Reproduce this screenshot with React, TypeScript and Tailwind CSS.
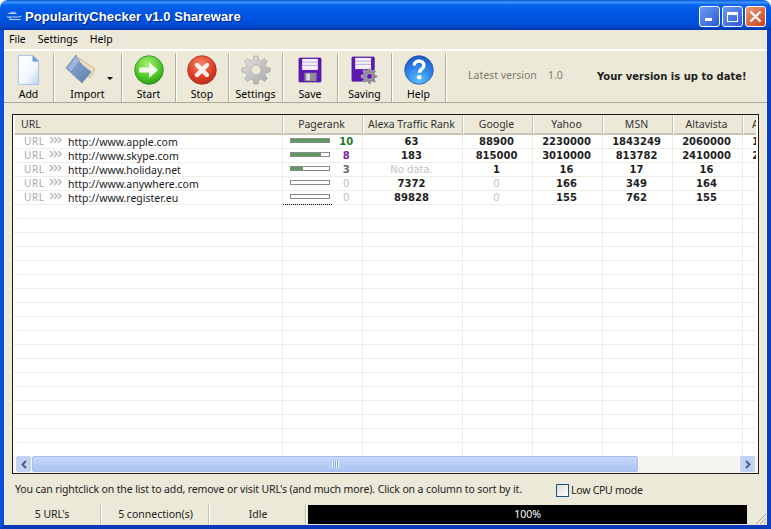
import React from "react";

const rows = [
  { url: "http://www.apple.com", pr: 10, prc: "text-[#1d7a2a] font-bold", fill: "w-full", cells: ["63", "88900", "2230000", "1843249", "2060000", "1950000"] },
  { url: "http://www.skype.com", pr: 8, prc: "text-[#7a1fa2] font-bold", fill: "w-[78%]", cells: ["183", "815000", "3010000", "813782", "2410000", "2340000"] },
  { url: "http://www.holiday.net", pr: 3, prc: "text-[#666666] font-bold", fill: "w-[30%]", cells: ["No data.", "1", "16", "17", "16", ""] },
  { url: "http://www.anywhere.com", pr: 0, prc: "text-[#c0c0c0] font-normal", fill: "w-0", cells: ["7372", "0", "166", "349", "164", ""] },
  { url: "http://www.register.eu", pr: 0, prc: "text-[#c0c0c0] font-normal", fill: "w-0", cells: ["89828", "0", "155", "762", "155", ""] },
];

const colW = ["w-[100px]", "w-[70px]", "w-[70px]", "w-[70px]", "w-[70px]", "w-[70px]"];

function Chevrons() {
  return (
    <svg width="14" height="8" viewBox="0 0 14 8" fill="none" stroke="#bdbdbd" strokeWidth="1.6">
      <path d="M1 1l3 3-3 3M5 1l3 3-3 3M9 1l3 3-3 3" />
    </svg>
  );
}

function AddIcon() {
  return (
    <svg width="25" height="32" viewBox="0 0 26 32">
      <defs>
        <linearGradient id="pg" x1="0" y1="0" x2="1" y2="1">
          <stop offset="0" stopColor="#ffffff" />
          <stop offset="0.6" stopColor="#f2f7ff" />
          <stop offset="1" stopColor="#bcd3f2" />
        </linearGradient>
      </defs>
      <path d="M2.5 1h15l6 6v24h-21z" fill="url(#pg)" stroke="#a9c2e6" />
      <path d="M17.5 1v6h6z" fill="#6f9ad6" stroke="#7ea4da" strokeWidth=".6" />
    </svg>
  );
}

function FolderIcon() {
  return (
    <svg width="32" height="32" viewBox="0 0 32 32">
      <defs>
        <linearGradient id="fg" x1="0" y1="0" x2="1" y2="1">
          <stop offset="0" stopColor="#8faed6" />
          <stop offset="1" stopColor="#5f7fb0" />
        </linearGradient>
      </defs>
      <path d="M14 4l16 11-5 9-10-7z" fill="#e9dcc0" stroke="#c9a878" strokeWidth=".7" />
      <path d="M11 1L1 14l16 15 9-11-9-7-3-4z" fill="url(#fg)" stroke="#6b86ad" strokeWidth=".7" />
      <path d="M3 14L11 3l3 4-8 10z" fill="#a9c2e2" opacity=".7" />
    </svg>
  );
}

function StartIcon() {
  return (
    <svg width="30" height="30" viewBox="0 0 30 30">
      <defs>
        <radialGradient id="gg" cx=".45" cy=".3" r=".8">
          <stop offset="0" stopColor="#a8f070" />
          <stop offset=".6" stopColor="#4cc626" />
          <stop offset="1" stopColor="#1f8a14" />
        </radialGradient>
      </defs>
      <circle cx="15" cy="15" r="14.3" fill="url(#gg)" stroke="#2a8a20" strokeWidth=".8" />
      <path d="M5 12.5h10V7l9 8-9 8v-5.5H5z" fill="#f2faee" />
    </svg>
  );
}

function StopIcon() {
  return (
    <svg width="30" height="30" viewBox="0 0 30 30">
      <defs>
        <radialGradient id="rg" cx=".45" cy=".3" r=".8">
          <stop offset="0" stopColor="#f58a6e" />
          <stop offset=".6" stopColor="#dd3c22" />
          <stop offset="1" stopColor="#a82414" />
        </radialGradient>
      </defs>
      <circle cx="15" cy="15" r="14.3" fill="url(#rg)" stroke="#a83020" strokeWidth=".8" />
      <path d="M10 10l10 10M20 10L10 20" stroke="#fff4f0" strokeWidth="4.4" strokeLinecap="round" />
    </svg>
  );
}

const gearPath =
  "M13 1h4l.7 4 2.6 1 3.3-2.4 2.8 2.8L24 9.7l1 2.6 4 .7v4l-4 .7-1 2.6 2.4 3.3-2.8 2.8-3.3-2.4-2.6 1-.7 4h-4l-.7-4-2.6-1-3.3 2.4-2.8-2.8L6 20.3l-1-2.6-4-.7v-4l4-.7 1-2.6-2.4-3.3 2.8-2.8L9.7 6l2.6-1zM15 10a5 5 0 100 10 5 5 0 000-10z";

function GearIcon() {
  return (
    <svg width="30" height="30" viewBox="0 0 30 30">
      <defs>
        <linearGradient id="sg" x1="0" y1="0" x2="1" y2="1">
          <stop offset="0" stopColor="#e4e4e4" />
          <stop offset="1" stopColor="#a6a6a6" />
        </linearGradient>
      </defs>
      <path d={gearPath} fill="url(#sg)" fillRule="evenodd" stroke="#a0a0a0" strokeWidth=".6" />
    </svg>
  );
}

function Floppy() {
  return (
    <>
      <rect x="1" y="1" width="24" height="26" rx="1" fill="#5f18b4" stroke="#4a1494" strokeWidth=".7" />
      <rect x="4.5" y="2" width="17" height="12" fill="#f3eff8" />
      <rect x="4.5" y="5" width="17" height="1" fill="#bcaad6" />
      <rect x="4.5" y="8.5" width="17" height="1" fill="#bcaad6" />
    </>
  );
}

function SaveIcon() {
  return (
    <svg width="24" height="26" viewBox="0 0 26 28">
      <Floppy />
      <rect x="7" y="17" width="13" height="9" fill="#8f8a96" />
      <rect x="9" y="18" width="4" height="7" fill="#ddd" />
    </svg>
  );
}

function SavingIcon() {
  return (
    <svg width="28" height="28" viewBox="0 0 30 30">
      <Floppy />
      <g transform="translate(10.5 12.5) scale(.62)">
        <path d={gearPath} fill="#8b8b8b" fillRule="evenodd" stroke="#e8e8e8" strokeWidth="1" />
      </g>
    </svg>
  );
}

function HelpIcon() {
  return (
    <svg width="30" height="30" viewBox="0 0 30 30">
      <defs>
        <radialGradient id="bg" cx=".5" cy=".85" r=".9">
          <stop offset="0" stopColor="#5cc0ff" />
          <stop offset=".6" stopColor="#2a7ae6" />
          <stop offset="1" stopColor="#1c4fb8" />
        </radialGradient>
      </defs>
      <circle cx="15" cy="15" r="14.3" fill="url(#bg)" stroke="#2a5cb4" strokeWidth=".8" />
      <path d="M10.3 10.5c0-6 9.6-6 9.6 0 0 3.6-4.6 3.6-4.6 7.2" fill="none" stroke="#fff" strokeWidth="3.4" />
      <circle cx="15.2" cy="22.3" r="2.3" fill="#fff" />
    </svg>
  );
}

function Tool({ label, width, icon, arrow }: { label: string; width: string; icon: React.ReactNode; arrow?: boolean }) {
  return (
    <div className={`${width} h-[49px] flex flex-col items-center relative border-r border-r-[#b4b09e] shadow-[1px_0_0_#ffffff]`}>
      <div className="h-[34px] flex items-center justify-center">{icon}</div>
      <div className="text-[10.5px] leading-[13px] text-black mt-[1px]">{label}</div>
      {arrow && <div className="absolute right-[8px] top-[24px] w-0 h-0 border-x-[3px] border-x-transparent border-t-[3px] border-t-black" />}
    </div>
  );
}

function HeaderCell({ label, width, left }: { label: string; width: string; left?: boolean }) {
  return (
    <div className={`${width} shrink-0 h-[20px] pt-[1px] flex items-center ${left ? "pl-[6px] justify-start" : "justify-center pr-[3px]"} border-r border-r-[#c7c3b0] border-l border-l-white border-b-2 border-b-[#c9c5b2] text-[10.5px] leading-none text-[#333]`}>
      {label}
    </div>
  );
}

export default function App() {
  return (
    <div className="w-[771px] h-[529px] flex flex-col overflow-hidden bg-white font-['Noto_Sans','DejaVu_Sans',sans-serif] text-[10.5px] text-black">
      {/* title bar */}
      <div className="h-[30px] shrink-0 rounded-t-[8px] flex items-center pl-[6px] pr-[5px] pt-[3px] bg-[linear-gradient(180deg,#0a58d8_0%,#3d95ff_8%,#0a66ee_16%,#0058e4_35%,#0053de_70%,#0048c8_90%,#0036a8_100%)]">
        <svg width="17" height="16" viewBox="0 0 20 16" fill="none" stroke="#dfe9f8" strokeWidth="1" className="shrink-0">
          <path d="M2 4l8-2 2 2H5M1 8h14l3-1M4 11h13M3 8l3 3" />
        </svg>
        <div className="ml-[2px] text-[13px] tracking-[0.08px] font-bold text-white [text-shadow:1px_1px_1px_#00208a] font-['Liberation_Sans',sans-serif]">
          PopularityChecker v1.0 Shareware
        </div>
        <div className="ml-auto flex gap-[2px]">
          <div className="w-[21px] h-[21px] rounded-[3px] border border-white bg-[linear-gradient(135deg,#6f9af0,#2a5ad8)] flex items-end pl-[5px] pb-[5px]">
            <div className="w-[7px] h-[3px] bg-white" />
          </div>
          <div className="w-[21px] h-[21px] rounded-[3px] border border-white bg-[linear-gradient(135deg,#6f9af0,#2a5ad8)] flex items-center justify-center">
            <div className="w-[11px] h-[10px] border border-white border-t-[3px]" />
          </div>
          <div className="w-[21px] h-[21px] rounded-[3px] border border-white bg-[linear-gradient(135deg,#ef9a78,#c8401c)] flex items-center justify-center">
            <svg width="13" height="13" viewBox="0 0 13 13" stroke="#fff" strokeWidth="2.2">
              <path d="M1.5 1.5l10 10M11.5 1.5l-10 10" />
            </svg>
          </div>
        </div>
      </div>

      {/* body with frame */}
      <div className="flex-1 min-h-0 flex flex-col bg-[#ece9d8] border-x-[4px] border-l-[#0a50dc] border-r-[#0a3ec4] border-b-[4px] border-b-[#0a3ab8]">
        {/* menu */}
        <div className="h-[19px] shrink-0 flex items-center pl-[5px] gap-[12px] text-black">
          <span>File</span>
          <span>Settings</span>
          <span>Help</span>
        </div>

        {/* toolbar */}
        <div className="h-[54px] shrink-0 border-t-[2px] border-t-white border-b border-b-[#aca899] flex pt-[2px] text-black">
          <Tool label="Add" width="w-[50px]" icon={<AddIcon />} />
          <Tool label="Import" width="w-[68px]" icon={<div className="-ml-[13px]"><FolderIcon /></div>} arrow />
          <Tool label="Start" width="w-[54px]" icon={<StartIcon />} />
          <Tool label="Stop" width="w-[53px]" icon={<StopIcon />} />
          <Tool label="Settings" width="w-[54px]" icon={<GearIcon />} />
          <Tool label="Save" width="w-[55px]" icon={<SaveIcon />} />
          <Tool label="Saving" width="w-[54px]" icon={<SavingIcon />} />
          <Tool label="Help" width="w-[54px]" icon={<HelpIcon />} />
          <div className="flex items-center h-[46px] pl-[22px] text-[#7e7b6e] whitespace-nowrap">
            <span className="w-[80px]">Latest version</span>
            <span className="w-[49px]">1.0</span>
            <span className="font-bold text-[#222] font-['DejaVu_Sans',sans-serif] text-[10px]">Your version is up to date!</span>
          </div>
        </div>

        {/* list */}
        <div className="mx-[8px] mt-[11px] h-[360px] shrink-0 border border-[#1c1c1c] bg-white flex flex-col overflow-hidden">
          <div className="shrink-0 pl-[1px] mr-[2px] overflow-hidden">
            <div className="flex w-[900px] bg-[#ece9d8]">
              <HeaderCell label="URL" width="w-[269px]" left />
              <HeaderCell label="Pagerank" width="w-[80px]" />
              <HeaderCell label="Alexa Traffic Rank" width="w-[100px]" />
              <HeaderCell label="Google" width="w-[70px]" />
              <HeaderCell label="Yahoo" width="w-[70px]" />
              <HeaderCell label="MSN" width="w-[70px]" />
              <HeaderCell label="Altavista" width="w-[70px]" />
              <HeaderCell label="Alltheweb" width="w-[70px]" />
            </div>
          </div>
          <div className="flex-1 min-h-0 overflow-hidden pl-[1px] mr-[2px]">
            {Array.from({ length: 23 }).map((_, i) => {
              const r = rows[i];
              return (
                <div key={i} className="flex h-[14px] w-[900px] border-b border-b-[#eeeee2]">
                  <div className="w-[269px] shrink-0 border-r border-r-[#eeeee2] flex pl-[10px] relative">
                    {r && (
                      <>
                        <span className="w-[25px] text-[10px] leading-[12px] tracking-[0.6px] text-[#a8a8a8]">URL</span>
                        <span className="w-[19px] mt-[1px]"><Chevrons /></span>
                        <span className="leading-[14px] text-[#1a1a1a]">{r.url}</span>
                      </>
                    )}
                  </div>
                  <div className="w-[80px] shrink-0 border-r border-r-[#eeeee2] flex items-start relative">
                    {r && (
                      <>
                        <div className="ml-[7px] mt-[3px] w-[41px] h-[5px] border border-[#8a8a8a] bg-white">
                          <div className={`h-full bg-[#5f9a62] ${r.fill}`} />
                        </div>
                        <div className={`w-[32px] text-center leading-[14px] font-['DejaVu_Sans',sans-serif] text-[10px] ${r.prc}`}>{r.pr}</div>
                        {i === 4 && <div className="absolute left-[0px] bottom-[-1px] w-[49px] border-b border-dotted border-b-black" />}
                      </>
                    )}
                  </div>
                  {colW.map((w, c) => {
                    const v = r ? r.cells[c] : "";
                    const dim = v === "0" || v === "No data.";
                    return (
                      <div key={c} className={`${w} shrink-0 border-r border-r-[#eeeee2] pr-[2px] text-center leading-[14px] font-['DejaVu_Sans',sans-serif] text-[10px] ${dim ? "font-normal text-[#c4c4c4]" : "font-bold text-[#1e1e1e]"}`}>
                        {v}
                      </div>
                    );
                  })}
                </div>
              );
            })}
          </div>
          {/* scrollbar */}
          <div className="h-[17px] shrink-0 flex items-stretch bg-[#f5f5f1] px-[3px] pb-[1px]">
            <div className="w-[15px] shrink-0 rounded-[2px] border border-[#c4d2ec] bg-[#bfd1f5] flex items-center justify-center">
              <svg width="8" height="9" viewBox="0 0 8 9" fill="none" stroke="#4d6185" strokeWidth="2"><path d="M6 1L2.5 4.5 6 8" /></svg>
            </div>
            <div className="w-[606px] ml-[1px] shrink-0 rounded-[2px] border border-[#a8bee8] bg-[linear-gradient(180deg,#c9d8fa,#b8cdf6_50%,#aec5f2)] flex items-center justify-center">
              <div className="w-[7px] h-[7px] bg-[repeating-linear-gradient(90deg,#eef3fd_0,#eef3fd_1px,#8ea8d8_1px,#8ea8d8_2px)]" />
            </div>
            <div className="flex-1" />
            <div className="w-[15px] shrink-0 rounded-[2px] border border-[#c4d2ec] bg-[#bfd1f5] flex items-center justify-center">
              <svg width="8" height="9" viewBox="0 0 8 9" fill="none" stroke="#4d6185" strokeWidth="2"><path d="M2 1l3.5 3.5L2 8" /></svg>
            </div>
          </div>
        </div>

        {/* hint row */}
        <div className="h-[30px] shrink-0 flex items-center pl-[11px] text-[#222] whitespace-nowrap">
          <span className="w-[541px] shrink-0 mt-[1px] tracking-[-0.12px]">You can rightclick on the list to add, remove or visit URL's (and much more). Click on a column to sort by it.</span>
          <span className="w-[13px] h-[13px] mt-[3px] border border-[#1c5180] bg-[linear-gradient(135deg,#dcdcd7,#ffffff)]" />
          <span className="ml-[2px] mt-[3px] tracking-[-0.25px]">Low CPU mode</span>
        </div>

        {/* status */}
        <div className="h-[21px] shrink-0 flex items-stretch text-[#222]">
          <div className="w-[97px] flex items-center justify-center border-r border-r-[#c4c0ae] shadow-[1px_0_0_#fff]">5 URL's</div>
          <div className="w-[106px] ml-[2px] flex items-center justify-center border-r border-r-[#c4c0ae] shadow-[1px_0_0_#fff]">5 connection(s)</div>
          <div className="w-[95px] ml-[2px] flex items-center justify-center border-r border-r-[#c4c0ae] shadow-[1px_0_0_#fff]">Idle</div>
          <div className="w-[439px] ml-[2px] mt-[1px] mb-[1px] bg-black text-white flex items-center justify-center">100%</div>
          <div className="flex-1 flex items-end justify-end">
            <svg width="12" height="12" viewBox="0 0 12 12" stroke="#b0ac9a" strokeWidth="1">
              <path d="M11 1L1 11M11 5l-6 6M11 9l-2 2" />
            </svg>
          </div>
        </div>
      </div>
    </div>
  );
}
